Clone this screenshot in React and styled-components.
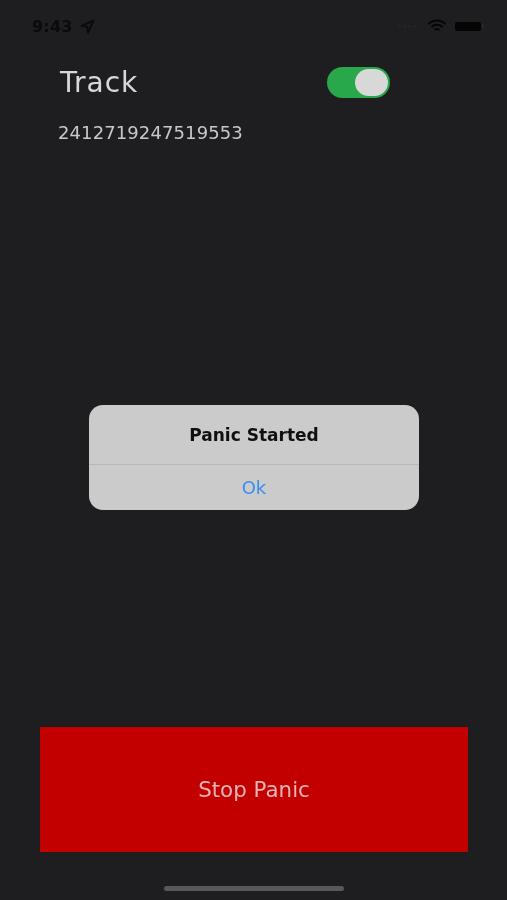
import React from "react";
import styled, { createGlobalStyle } from "styled-components";

const Global = createGlobalStyle`
  html, body { margin: 0; padding: 0; background: #1e1e20; }
  * { box-sizing: border-box; }
`;

const Screen = styled.div`
  position: relative;
  width: 507px;
  height: 900px;
  overflow: hidden;
  display: flex;
  flex-direction: column;
  background: #1e1e20;
  font-family: "DejaVu Sans", "Liberation Sans", sans-serif;
  color: #d6d6d6;
  filter: blur(0.4px);
`;

const StatusBar = styled.div`
  height: 52px;
  padding: 0 23px 0 32px;
  display: flex;
  align-items: center;
  justify-content: space-between;
  color: #0b0b0b;
  filter: blur(0.4px);
`;

const StatusGroup = styled.div`
  display: flex;
  align-items: center;
  gap: ${(p) => p.$gap}px;
`;

const Time = styled.span`
  font-size: 16px;
  font-weight: 700;
  letter-spacing: 0.2px;
`;

const SignalBars = styled.div`
  display: flex;
  align-items: flex-end;
  gap: 2px;
  margin-right: 3px;
`;

const SignalBar = styled.div`
  width: 3px;
  height: 3px;
  border-radius: 1px;
  background: #242426;
`;

const BatteryBody = styled.div`
  width: 26px;
  height: 9px;
  border-radius: 2px;
  background: #050505;
`;

const BatteryNub = styled.div`
  width: 2px;
  height: 4px;
  margin-left: 1px;
  border-radius: 1px;
  background: #2a2a2c;
`;

const Battery = styled.div`
  display: flex;
  align-items: center;
`;

const TrackRow = styled.div`
  display: flex;
  align-items: center;
  justify-content: space-between;
  height: 31px;
  margin-top: 15px;
  padding: 0 117px 0 60px;
`;

const TrackLabel = styled.span`
  font-size: 28px;
  font-weight: 400;
  letter-spacing: 1px;
  color: #d8d8d8;
`;

const Toggle = styled.div`
  width: 63px;
  height: 31px;
  border-radius: 16px;
  background: #28a84a;
  display: flex;
  align-items: center;
  justify-content: flex-end;
  padding-right: 2px;
`;

const Thumb = styled.div`
  width: 33px;
  height: 27px;
  border-radius: 14px;
  background: #d8d8d8;
`;

const DeviceId = styled.div`
  margin-top: 22px;
  padding-left: 58px;
  font-size: 18px;
  line-height: 26px;
  letter-spacing: 0.1px;
  color: #c8c8c8;
`;

const Spacer = styled.div`
  flex: 1;
`;

const StopButton = styled.button`
  display: flex;
  align-items: center;
  justify-content: center;
  width: 428px;
  height: 125px;
  margin: 0 0 0 40px;
  padding: 0;
  border: none;
  background: #c20000;
  color: #e6b4b4;
  font-family: inherit;
  font-size: 21.4px;
`;

const HomeBar = styled.div`
  width: 180px;
  height: 5px;
  margin: 34px 0 9px 164px;
  border-radius: 3px;
  background: #58585a;
`;

const Alert = styled.div`
  position: absolute;
  left: 89px;
  top: 405px;
  width: 330px;
  height: 105px;
  border-radius: 14px;
  background: #cbcbcb;
  display: flex;
  flex-direction: column;
`;

const AlertTitle = styled.div`
  height: 60px;
  display: flex;
  align-items: center;
  justify-content: center;
  font-size: 17px;
  font-weight: 700;
  color: #101010;
  border-bottom: 1px solid #b8b8b8;
`;

const AlertAction = styled.div`
  flex: 1;
  display: flex;
  align-items: center;
  justify-content: center;
  font-size: 18px;
  color: #3a8dee;
`;

export default function App() {
  return (
    <Screen>
      <Global />
      <StatusBar>
        <StatusGroup $gap={7}>
          <Time>9:43</Time>
          <svg width="15" height="15" viewBox="0 0 15 15" fill="none" stroke="#0b0b0b" strokeWidth="2" strokeLinejoin="round">
            <path d="M13.5 1.5 1.5 6.8l5.7.9.9 5.8z" />
          </svg>
        </StatusGroup>
        <StatusGroup $gap={8}>
          <SignalBars>
            <SignalBar />
            <SignalBar />
            <SignalBar />
            <SignalBar />
          </SignalBars>
          <svg width="20" height="14" viewBox="0 0 19 14" fill="none" stroke="#050505" strokeWidth="2">
            <path d="M1 5a12 12 0 0 1 17 0" />
            <path d="M4 8a8 8 0 0 1 11 0" />
            <path d="M7 11a4 4 0 0 1 5 0" />
          </svg>
          <Battery>
            <BatteryBody />
            <BatteryNub />
          </Battery>
        </StatusGroup>
      </StatusBar>
      <TrackRow>
        <TrackLabel>Track</TrackLabel>
        <Toggle>
          <Thumb />
        </Toggle>
      </TrackRow>
      <DeviceId>2412719247519553</DeviceId>
      <Spacer />
      <StopButton>Stop Panic</StopButton>
      <HomeBar />
      <Alert>
        <AlertTitle>Panic Started</AlertTitle>
        <AlertAction>Ok</AlertAction>
      </Alert>
    </Screen>
  );
}
